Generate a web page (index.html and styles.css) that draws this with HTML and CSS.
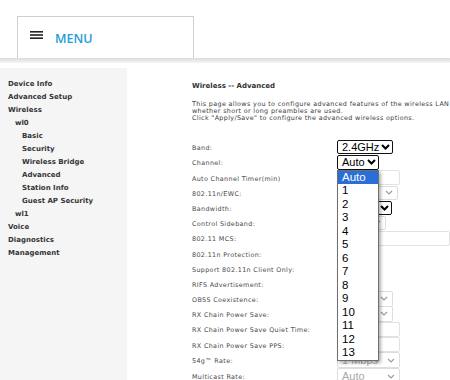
FILE: index.html
```html
<!DOCTYPE html>
<html lang="en">
<head>
<meta charset="utf-8">
<title>Wireless -- Advanced</title>
<link rel="stylesheet" href="styles.css">
</head>
<body>
<header class="header">
  <div class="menu-box">
    <svg class="burger" width="13" height="8" viewBox="0 0 13 8"><rect x="0" y="0" width="13" height="1.6"/><rect x="0" y="3.2" width="13" height="1.6"/><rect x="0" y="6.4" width="13" height="1.6"/></svg>
    <span class="menu-text">MENU</span>
  </div>
</header>
<div class="header-shadow"></div>
<div class="main">
  <nav class="sidebar">
    <a class="nav l0">Device Info</a>
    <a class="nav l0">Advanced Setup</a>
    <a class="nav l0">Wireless</a>
    <a class="nav l1">wl0</a>
    <a class="nav l2">Basic</a>
    <a class="nav l2">Security</a>
    <a class="nav l2">Wireless Bridge</a>
    <a class="nav l2">Advanced</a>
    <a class="nav l2">Station Info</a>
    <a class="nav l2">Guest AP Security</a>
    <a class="nav l1">wl1</a>
    <a class="nav l0">Voice</a>
    <a class="nav l0">Diagnostics</a>
    <a class="nav l0">Management</a>
  </nav>
  <section class="content">
    <div class="title">Wireless -- Advanced</div>
    <p class="intro">This page allows you to configure advanced features of the wireless LAN interface. You can select a particular channel on which to operate, force the transmission rate to a particular speed, set the fragmentation threshold, set the RTS threshold, set the wakeup interval for clients in power-save mode, set the beacon interval for the access point, set XPress mode and set<br>whether short or long preambles are used.<br>Click "Apply/Save" to configure the advanced wireless options.</p>
    <div class="form">
      <div class="row h14"><span class="label">Band:</span>
        <div class="sel on w-band"><span>2.4GHz</span><svg class="chev" width="9" height="6" viewBox="0 0 9 6"><polyline points="1,1 4.5,4.5 8,1"/></svg></div>
      </div>
      <div class="row h16"><span class="label">Channel:</span>
        <div class="sel-wrap">
          <div class="sel on w-chan"><span>Auto</span><svg class="chev" width="9" height="6" viewBox="0 0 9 6"><polyline points="1,1 4.5,4.5 8,1"/></svg></div>
          <ul class="dropdown">
            <li class="opt active">Auto</li>
            <li class="opt">1</li><li class="opt">2</li><li class="opt">3</li><li class="opt">4</li>
            <li class="opt">5</li><li class="opt">6</li><li class="opt">7</li><li class="opt">8</li>
            <li class="opt">9</li><li class="opt">10</li><li class="opt">11</li><li class="opt">12</li><li class="opt">13</li>
          </ul>
        </div>
      </div>
      <div class="row h15"><span class="label">Auto Channel Timer(min)</span><div class="inp w63"></div></div>
      <div class="row h15"><span class="label">802.11n/EWC:</span>
        <div class="sel off w61"><span></span><svg class="chev-off" width="8" height="5" viewBox="0 0 8 5"><polyline points="1,1 4,4 7,1"/></svg></div></div>
      <div class="row h15"><span class="label">Bandwidth:</span>
        <div class="sel on w55"><span></span><svg class="chev" width="9" height="6" viewBox="0 0 9 6"><polyline points="1,1 4.5,4.5 8,1"/></svg></div></div>
      <div class="row h15"><span class="label">Control Sideband:</span>
        <div class="sel off w49"><span></span><svg class="chev-off" width="8" height="5" viewBox="0 0 8 5"><polyline points="1,1 4,4 7,1"/></svg></div></div>
      <div class="row h16"><span class="label">802.11 MCS:</span><div class="inp w-mcs"></div></div>
      <div class="row h15"><span class="label">802.11n Protection:</span><div class="sel off w40"></div></div>
      <div class="row h15"><span class="label">Support 802.11n Client Only:</span><div class="sel off w40"></div></div>
      <div class="row h15"><span class="label">RIFS Advertisement:</span><div class="sel off w40"></div></div>
      <div class="row h15"><span class="label">OBSS Coexistence:</span>
        <div class="sel off w56 tall"><span></span><svg class="chev-off" width="8" height="5" viewBox="0 0 8 5"><polyline points="1,1 4,4 7,1"/></svg></div></div>
      <div class="row h15"><span class="label">RX Chain Power Save:</span>
        <div class="sel off w56 tall"><span></span><svg class="chev-off" width="8" height="5" viewBox="0 0 8 5"><polyline points="1,1 4,4 7,1"/></svg></div></div>
      <div class="row h16"><span class="label">RX Chain Power Save Quiet Time:</span><div class="inp w63"></div></div>
      <div class="row h15"><span class="label">RX Chain Power Save PPS:</span><div class="inp w63"></div></div>
      <div class="row h16"><span class="label">54g&#8482; Rate:</span>
        <div class="sel off w63 tall"><span>1 Mbps</span><svg class="chev-off" width="8" height="5" viewBox="0 0 8 5"><polyline points="1,1 4,4 7,1"/></svg></div></div>
      <div class="row h16"><span class="label">Multicast Rate:</span>
        <div class="sel off w63 tall"><span>Auto</span><svg class="chev-off" width="8" height="5" viewBox="0 0 8 5"><polyline points="1,1 4,4 7,1"/></svg></div></div>
    </div>
  </section>
</div>
</body>
</html>
```
FILE: styles.css
```css
html, body {
  margin: 0;
  padding: 0;
  overflow: hidden;
  background: #fff;
}
body {
  font-family: "DejaVu Sans", sans-serif;
  width: 450px;
  height: 380px;
}
.header {
  height: 58px;
  padding: 16px 0 0 17px;
  box-sizing: border-box;
}
.menu-box {
  width: 177px;
  height: 42px;
  box-sizing: border-box;
  border: 1px solid #cfcfcf;
  border-bottom: none;
  display: flex;
  align-items: flex-start;
  padding: 14px 0 0 12px;
}
.burger {
  fill: #222;
  display: block;
}
.menu-text {
  font-family: "Open Sans", sans-serif;
  font-weight: 600;
  font-size: 12.5px;
  line-height: 12.5px;
  color: #239ed8;
  margin: 2px 0 0 12px;
}
.header-shadow {
  height: 5px;
  background: linear-gradient(#dcdcdc, #f4f4f4);
  margin-bottom: 5px;
}
.main {
  display: flex;
  align-items: stretch;
  height: 312px;
}
.sidebar {
  width: 127px;
  flex: none;
  background: #f5f5f5;
  padding-top: 10px;
  box-sizing: border-box;
}
.nav {
  display: block;
  font-weight: bold;
  font-size: 7px;
  line-height: 13px;
  color: #363636;
  white-space: nowrap;
}
.l0 { padding-left: 8px; }
.l1 { padding-left: 15px; }
.l2 { padding-left: 22px; }
.content {
  flex: none;
  width: 700px;
  padding: 13px 0 0 65px;
  color: #4a4a4a;
  font-size: 6.4px;
  letter-spacing: 0.35px;
}
.title {
  font-weight: bold;
  font-size: 7px;
  letter-spacing: 0;
  line-height: 10px;
  color: #333;
}
.intro {
  margin: 10px 0 0;
  line-height: 6.8px;
  white-space: nowrap;
  color: #3c3c3c;
}
.form {
  margin-top: 19px;
}
.row {
  display: flex;
  align-items: center;
}
.h14 { height: 14px; }
.h15 { height: 15px; }
.h16 { height: 16px; }
.label {
  width: 145px;
  flex: none;
  padding-top: 2px;
  white-space: nowrap;
}
.sel-wrap {
  position: relative;
}
.sel {
  display: flex;
  align-items: center;
  justify-content: space-between;
  box-sizing: border-box;
  height: 14px;
  border-radius: 2px;
  font-family: "Liberation Sans", Arial, sans-serif;
  font-size: 11px;
  letter-spacing: 0;
  padding: 0 2px 0 4px;
  background: #fff;
}
.sel.tall { height: 16px; }
.sel.on {
  border: 1px solid #111;
  color: #000;
}
.sel.off {
  border: 1px solid #dedede;
  color: #a8a8a8;
  padding-right: 4px;
}
.w-chan { height: 15px; }
.chev {
  fill: none;
  stroke: #000;
  stroke-width: 2;
  flex: none;
}
.chev-off {
  fill: none;
  stroke: #9c9c9c;
  stroke-width: 1.2;
  flex: none;
}
.inp {
  height: 15px;
  box-sizing: border-box;
  border: 1px solid #e2e2e2;
  border-radius: 2px;
  background: #fff;
}
.w-band { width: 56px; }
.w-chan { width: 42px; }
.w63 { width: 63px; }
.w61 { width: 61px; }
.w56 { width: 56px; }
.w55 { width: 55px; }
.w49 { width: 49px; }
.w40 { width: 40px; }
.w-mcs { width: 113px; }
.dropdown {
  position: absolute;
  left: 0;
  top: 15px;
  z-index: 10;
  margin: 0;
  padding: 0;
  list-style: none;
  width: 42px;
  box-sizing: border-box;
  background: #fff;
  border: 1px solid #6e6e6e;
  box-shadow: 2px 2px 3px rgba(0, 0, 0, 0.3);
  font-family: "Liberation Sans", Arial, sans-serif;
  font-size: 11.5px;
  letter-spacing: 0;
  color: #000;
}
.opt {
  height: 13.5px;
  line-height: 13.5px;
  padding-left: 4px;
}
.opt.active {
  background: #2a6ed8;
  color: #fff;
}
```
